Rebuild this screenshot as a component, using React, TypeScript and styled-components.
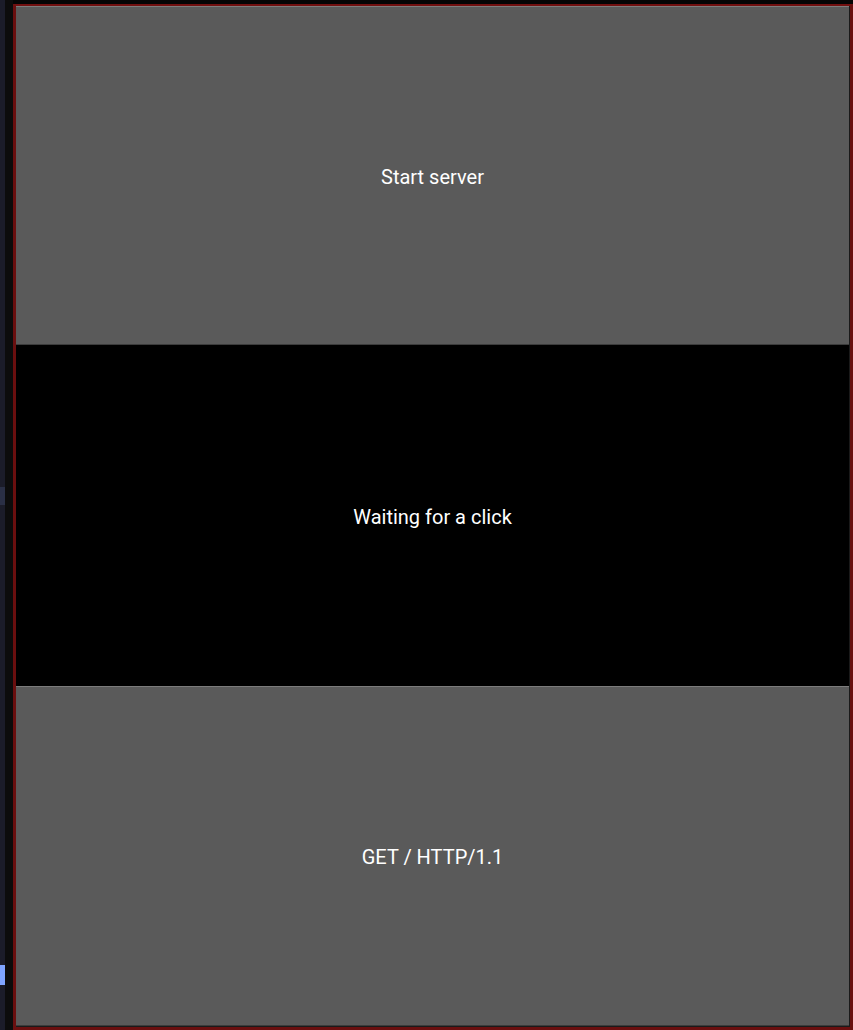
import React from "react";
import styled, { createGlobalStyle } from "styled-components";

const Global = createGlobalStyle`
  html, body { margin: 0; padding: 0; background: #000; }
  body { font-family: Roboto, "Noto Sans", sans-serif; overflow: hidden; }
`;

const Screen = styled.div`
  display: flex;
  width: 853px;
  height: 1030px;
  background: #050505;
`;

const Desktop = styled.div`
  width: 5px;
  flex: none;
  background: #1b1c29;
  display: flex;
  flex-direction: column;
`;

const DeskBlock = styled.div<{ $h: number; $c: string }>`
  height: ${(p) => p.$h}px;
  background: ${(p) => p.$c};
`;

const Shadow = styled.div`
  width: 8px;
  flex: none;
  background: #0c0c0c;
`;

const Frame = styled.div`
  flex: 1;
  margin-top: 4px;
  display: flex;
  flex-direction: column;
  border-left: 3px solid #6a0f0f;
  border-top: 2px solid #721010;
  border-right: 3px solid #6a0f0f;
  border-bottom: 3px solid #6a0f0f;
  background: #000;
  min-width: 0;
`;

const Inner = styled.div`
  flex: 1;
  display: flex;
  flex-direction: column;
  border-right: 1px solid #1a1a1a;
  border-bottom: 1px solid #1a1a1a;
`;

const Button = styled.button<{ $h: number }>`
  height: ${(p) => p.$h}px;
  flex: none;
  margin: 0;
  padding: 2px 0 0;
  border: none;
  border-top: 1px solid #7c7c7c;
  border-bottom: 1px solid #3c3c3c;
  background: #5a5a5a;
  color: #fff;
  font-family: Roboto, "Noto Sans", sans-serif;
  font-size: 20px;
  display: flex;
  align-items: center;
  justify-content: center;
  box-sizing: border-box;
`;

const Label = styled.div`
  flex: 1;
  background: #000;
  color: #fff;
  font-size: 20px;
  padding-top: 2px;
  display: flex;
  align-items: center;
  justify-content: center;
`;

export default function App() {
  return (
    <>
      <Global />
      <Screen>
        <Desktop>
          <DeskBlock $h={487} $c="#1b1c29" />
          <DeskBlock $h={18} $c="#2a2f45" />
          <DeskBlock $h={460} $c="#1b1c29" />
          <DeskBlock $h={20} $c="#7fa4ff" />
        </Desktop>
        <Shadow />
        <Frame>
          <Inner>
            <Button $h={339}>Start server</Button>
            <Label>Waiting for a click</Label>
            <Button $h={340}>GET / HTTP/1.1</Button>
          </Inner>
        </Frame>
      </Screen>
    </>
  );
}
